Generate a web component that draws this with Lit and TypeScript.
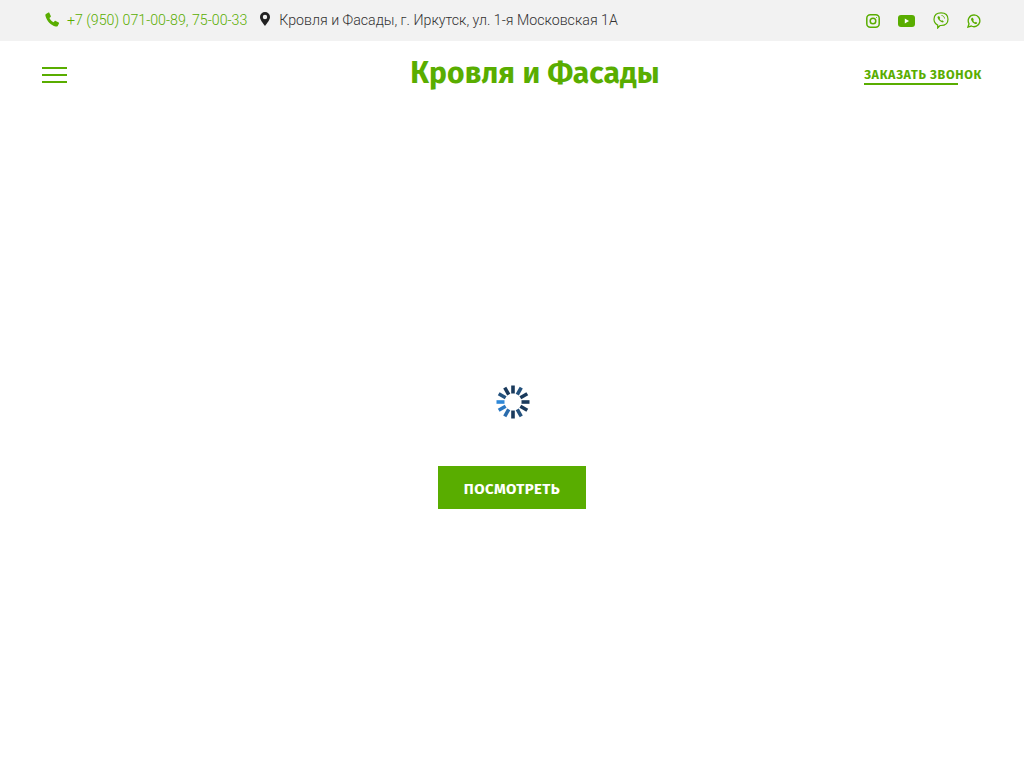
import { LitElement, html, css, svg } from "lit";
import { customElement } from "lit/decorators.js";

const spokes = [
  ["#1a3a5c", 0], ["#24527e", 30], ["#1a3a5c", 60], ["#1a3a5c", 90], ["#1a3a5c", 120], ["#24527e", 150],
  ["#1a3a5c", 180], ["#2a6cad", 210], ["#2a78c2", 240], ["#2f88d8", 270], ["#24527e", 300], ["#1a3a5c", 330],
] as const;

@customElement("app-root")
export class AppRoot extends LitElement {
  static styles = css`
    :host { display: block; min-height: 768px; background: #fff; font-family: Roboto, sans-serif; }
    .top { height: 41px; background: #f2f2f2; display: flex; align-items: center; padding: 0 43px 2px 45px; box-sizing: border-box; font-size: 14.2px; font-weight: 300; }
    .phone { display: flex; align-items: center; color: #59ad00; }
    .phone svg { margin-right: 7px; }
    .addr { display: flex; align-items: center; color: #333; margin-left: 13px; }
    .addr svg { margin-right: 9px; margin-top: -2px; }
    .addr svg path { fill: #222; }
    .social { margin-left: auto; display: flex; align-items: center; gap: 18px; margin-top: 2px; }
    .social svg { display: block; }
    .head { height: 67px; display: grid; grid-template-columns: 1fr auto 1fr; align-items: center; padding: 0 42px; }
    .burger { width: 25px; display: flex; flex-direction: column; gap: 5px; }
    .burger i { display: block; height: 2px; background: #59ad00; }
    .logo { font-family: "Fira Sans", "Noto Sans", sans-serif; font-weight: 700; font-size: 30px; line-height: 34px; color: #59ad00; letter-spacing: 0.1px; margin: 0 0 3px 46px; }
    .call { justify-self: end; font-family: "Fira Sans", "Noto Sans", sans-serif; font-weight: 700; font-size: 12.5px; letter-spacing: 0.67px; color: #59ad00; line-height: 17px; position: relative; padding-top: 1px; padding-bottom: 1px; }
    .call::after { content: ""; position: absolute; left: 0; bottom: -1px; width: 94px; height: 2px; background: #59ad00; }
    .main { display: flex; flex-direction: column; align-items: center; padding-top: 277px; }
    .spin { display: block; margin-left: 2px; }
    .btn { margin-top: 47px; width: 148px; height: 43px; background: #59ad00; color: #fff; display: flex; align-items: center; justify-content: center; font-family: "Fira Sans", "Noto Sans", sans-serif; font-weight: 700; font-size: 15px; letter-spacing: 0.4px; padding-top: 2px; box-sizing: border-box; }
  `;

  render() {
    return html`
      <div class="top">
        <span class="phone">
          <svg width="15" height="15" viewBox="0 0 15 15"><path fill="#59ad00" d="M3.4.6 1 1.9C.4 2.3.3 3 .5 4c1.2 4.900 5.300 9.300 10.200 10.500.9.200 1.600 0 2-.6l1.300-2.300c.2-.4.100-.8-.3-1l-3-1.700c-.4-.2-.7-.1-1 .2L8.600 10.300C6.800 9.500 5.200 8 4.400 6.100l1.200-1.100c.3-.3.400-.6.200-1L4.400.9C4.200.5 3.800.4 3.400.6Z"/></svg>
          +7 (950) 071-00-89, 75-00-33
        </span>
        <span class="addr">
          <svg width="10" height="14" viewBox="0 0 10 14"><path fill-rule="evenodd" d="M5 0a5 5 0 0 0-5 5c0 3 3.200 6.500 5 9 1.800-2.500 5-6 5-9a5 5 0 0 0-5-5Zm0 2.800a2.200 2.200 0 1 1 0 4.400 2.200 2.200 0 0 1 0-4.400Z"/></svg>
          Кровля и Фасады, г. Иркутск, ул. 1-я Московская 1А
        </span>
        <span class="social">
          <svg width="14" height="14" viewBox="0 0 14 14" fill="none" stroke="#59ad00" stroke-width="1.500"><rect x=".8" y=".8" width="12.400" height="12.400" rx="3.500"/><circle cx="7" cy="7" r="2.800"/><circle cx="10.500" cy="3.500" r=".5" fill="#59ad00" stroke="none"/></svg>
          <svg width="17" height="12" viewBox="0 0 17 12"><rect width="17" height="12" rx="3" fill="#59ad00"/><path d="M6.800 3.500v5l4.200-2.500Z" fill="#fff"/></svg>
          <svg width="16" height="17" viewBox="0 0 16 17" fill="none" stroke="#59ad00" stroke-width="1.200"><path d="M8 .8c3.800 0 7 1.500 7 6.500 0 4.700-3.200 6.200-7 6.200l-1 0-2.300 2.500v-2.900C2.200 11.800 1 10 1 7.300 1 2.300 4.200.8 8 .8Z"/><path d="M5.400 4.200c-.8.400-1 1-.7 1.800.8 2 2.300 3.500 4.300 4.300.8.300 1.500-.1 1.800-.9l-1.600-1.200-.8.600c-.8-.4-1.400-1.100-1.800-1.900l.6-.8-1-1.900Z" fill="#59ad00" stroke="none"/><path d="M8.500 3.500c1.600 0 3 1.400 3 3" stroke-width=".9"/></svg>
          <svg width="14" height="14" viewBox="0 0 15 15" fill="none" stroke="#59ad00" stroke-width="1.400"><path d="M7.600 1A6.300 6.300 0 0 0 2.200 10.500L1 14l3.600-1.100A6.300 6.300 0 1 0 7.600 1Z"/><path d="M5.400 3.900c-1 .5-1.300 1.300-.9 2.400.8 2 2.200 3.500 4.300 4.300 1 .3 1.900 0 2.300-1l-1.600-1.200-.9.700c-.9-.4-1.500-1.100-1.900-2l.6-.8-1-2.200Z" fill="#59ad00" stroke="none"/></svg>
        </span>
      </div>
      <div class="head">
        <div class="burger"><i></i><i></i><i></i></div>
        <div class="logo">Кровля и Фасады</div>
        <div class="call">ЗАКАЗАТЬ ЗВОНОК</div>
      </div>
      <div class="main">
        <svg class="spin" width="34" height="34" viewBox="-17 -17 34 34">
          ${spokes.map(([c, a]) => svg`<rect x="-1.800" y="-16.500" width="3.600" height="8" fill=${c} transform="rotate(${a})"/>`)}
        </svg>
        <div class="btn">ПОСМОТРЕТЬ</div>
      </div>
    `;
  }
}
